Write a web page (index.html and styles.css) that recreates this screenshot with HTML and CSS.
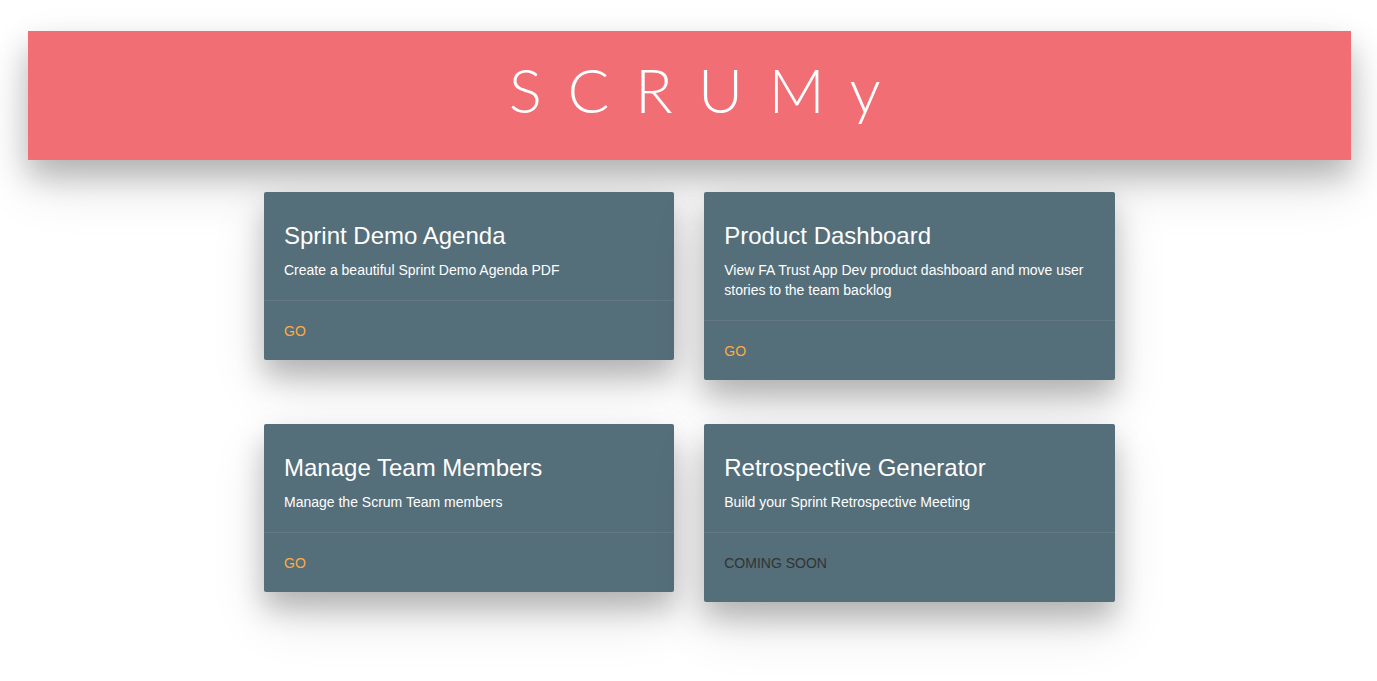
FILE: index.html
```html
<!DOCTYPE html>
<html lang="en">
  <head>
    <meta charset="UTF-8" />
    <meta name="viewport" content="width=device-width, initial-scale=1.0" />
    <title>SCRUMy</title>
    <link rel="stylesheet" href="styles.css">
  </head>
  <body>
    <header class="banner">
      <h1 class="brand">SCRUMy</h1>
    </header>

    <main class="tools">
      <div class="row">
        <div class="card">
          <div class="card-content">
            <span class="card-title">Sprint Demo Agenda</span>
            <p>Create a beautiful Sprint Demo Agenda PDF</p>
          </div>
          <div class="card-action">
            <a href="#">Go</a>
          </div>
        </div>
        <div class="card">
          <div class="card-content">
            <span class="card-title">Product Dashboard</span>
            <p>View FA Trust App Dev product dashboard and move user stories to the team backlog</p>
          </div>
          <div class="card-action">
            <a href="#">Go</a>
          </div>
        </div>
      </div>

      <div class="row">
        <div class="card">
          <div class="card-content">
            <span class="card-title">Manage Team Members</span>
            <p>Manage the Scrum Team members</p>
          </div>
          <div class="card-action">
            <a href="#">Go</a>
          </div>
        </div>
        <div class="card">
          <div class="card-content">
            <span class="card-title">Retrospective Generator</span>
            <p>Build your Sprint Retrospective Meeting</p>
          </div>
          <div class="card-action pending">
            <span class="soon">Coming soon</span>
          </div>
        </div>
      </div>
    </main>
  </body>
</html>
```

FILE: styles.css
```css
* {
  margin: 0;
  padding: 0;
  box-sizing: border-box;
}

body {
  background: #fff;
  font-family: "Liberation Sans", Arial, sans-serif;
  color: #fff;
  padding-top: 31px;
  min-height: 100vh;
}

.banner {
  height: 129px;
  margin: 0 26px 0 28px;
  padding-bottom: 14px;
  background: #f06e74;
  display: flex;
  align-items: center;
  justify-content: center;
  box-shadow: 0 16px 28px 0 rgba(0, 0, 0, 0.22),
    0 25px 55px 0 rgba(0, 0, 0, 0.12);
}

.brand {
  font-family: Lato, "Open Sans", sans-serif;
  font-weight: 300;
  font-size: 62px;
  letter-spacing: 25.5px;
  padding-left: 36px;
  line-height: 1;
  color: #fff;
}

.tools {
  width: 852px;
  margin: 24px auto 0;
  padding-left: 1.5px;
}

.row {
  display: flex;
  align-items: flex-start;
  gap: 30px;
  margin-bottom: 20px;
}

.card {
  width: 411px;
  margin: 8px 0 16px;
  background: #546e7a;
  border-radius: 2px;
  box-shadow: 0 16px 28px 0 rgba(0, 0, 0, 0.22),
    0 25px 55px 0 rgba(0, 0, 0, 0.12);
}

.card-content {
  padding: 28px 20px 20px;
}

.card-title {
  display: block;
  font-size: 24px;
  line-height: 32px;
  margin-bottom: 8px;
}

.card-content p {
  font-size: 14px;
  line-height: 20px;
}

.card-action {
  border-top: 1px solid rgba(160, 160, 160, 0.2);
  padding: 17px 20px 15px;
  font-size: 14px;
  line-height: 27px;
  text-transform: uppercase;
}

.card-action.pending {
  padding-bottom: 25px;
}

.card-action a {
  color: #ffab40;
  text-decoration: none;
}

.soon {
  color: #333;
}
```
